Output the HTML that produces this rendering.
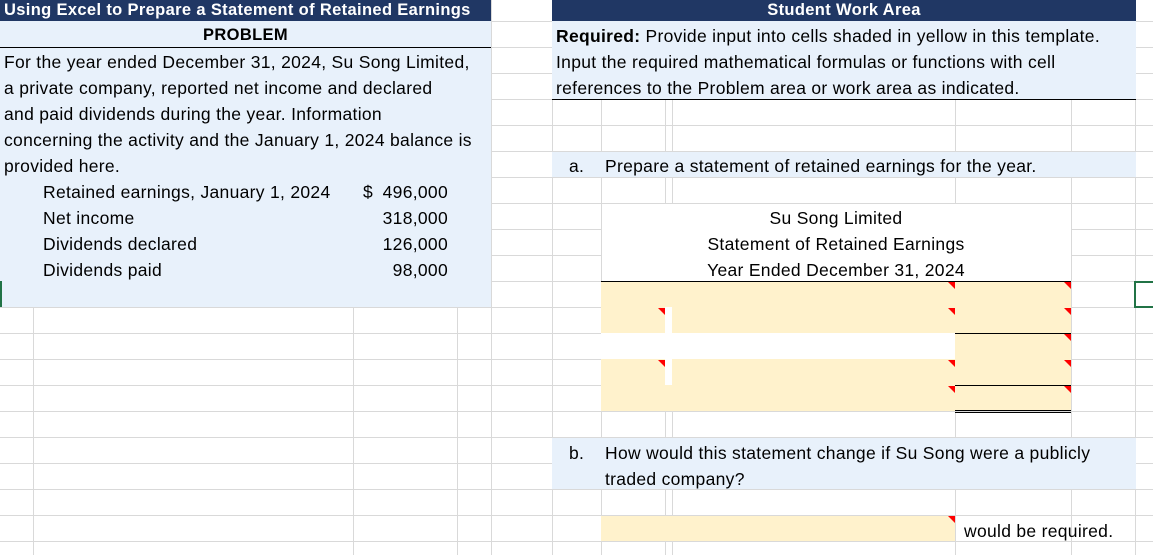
<!DOCTYPE html>
<html><head><meta charset="utf-8"><style>
body{margin:0;width:1153px;height:555px;overflow:hidden;background:#fff;position:relative;font-family:"Liberation Sans",sans-serif;font-size:17.5px;letter-spacing:.3px;color:#000}
.a{position:absolute}
.h{position:absolute;height:1px;background:#d9d9d9}
.v{position:absolute;width:1px;background:#d9d9d9}
.t{position:absolute;white-space:nowrap;line-height:26px;padding-top:2px}
.y{position:absolute;background:#fff2cc}
.b{position:absolute;background:#e8f1fb}
.r{position:absolute;width:0;height:0;border-top:7px solid #f00;border-left:7px solid transparent}
.k{position:absolute;height:1px;background:#000}
.bt{font-weight:bold;font-size:16.5px;letter-spacing:.35px;padding-top:0}
</style></head><body>
<div class="h" style="left:0;right:0;top:21px"></div>
<div class="h" style="left:0;right:0;top:47px"></div>
<div class="h" style="left:0;right:0;top:73px"></div>
<div class="h" style="left:0;right:0;top:99px"></div>
<div class="h" style="left:0;right:0;top:125px"></div>
<div class="h" style="left:0;right:0;top:151px"></div>
<div class="h" style="left:0;right:0;top:177px"></div>
<div class="h" style="left:0;right:0;top:203px"></div>
<div class="h" style="left:0;right:0;top:229px"></div>
<div class="h" style="left:0;right:0;top:255px"></div>
<div class="h" style="left:0;right:0;top:281px"></div>
<div class="h" style="left:0;right:0;top:307px"></div>
<div class="h" style="left:0;right:0;top:333px"></div>
<div class="h" style="left:0;right:0;top:359px"></div>
<div class="h" style="left:0;right:0;top:385px"></div>
<div class="h" style="left:0;right:0;top:411px"></div>
<div class="h" style="left:0;right:0;top:437px"></div>
<div class="h" style="left:0;right:0;top:463px"></div>
<div class="h" style="left:0;right:0;top:489px"></div>
<div class="h" style="left:0;right:0;top:515px"></div>
<div class="h" style="left:0;right:0;top:541px"></div>
<div class="v" style="top:0;bottom:0;left:33px"></div>
<div class="v" style="top:0;bottom:0;left:353px"></div>
<div class="v" style="top:0;bottom:0;left:457px"></div>
<div class="v" style="top:0;bottom:0;left:491px"></div>
<div class="v" style="top:0;bottom:0;left:552px"></div>
<div class="v" style="top:0;bottom:0;left:601px"></div>
<div class="v" style="top:0;bottom:0;left:665px"></div>
<div class="v" style="top:0;bottom:0;left:672px"></div>
<div class="v" style="top:0;bottom:0;left:955px"></div>
<div class="v" style="top:0;bottom:0;left:1071px"></div>
<div class="v" style="top:0;bottom:0;left:1135px"></div>

<div class="b" style="left:0;top:21px;width:491px;height:286px"></div>
<div class="a" style="left:0;top:0;width:491px;height:21px;background:#203764"></div>
<div class="t bt" style="left:4px;top:0;line-height:21px;color:#fff">Using Excel to Prepare a Statement of Retained Earnings</div>
<div class="t bt" style="left:0;width:491px;text-align:center;top:22px">PROBLEM</div>
<div class="k" style="left:0;width:491px;top:47px"></div>
<div class="t" style="left:4px;top:47px">For the year ended December 31, 2024, Su Song Limited,</div>
<div class="t" style="left:4px;top:73px">a private company, reported net income and declared</div>
<div class="t" style="left:4px;top:99px">and paid dividends during the year. Information</div>
<div class="t" style="left:4px;top:125px">concerning the activity and the January 1, 2024 balance is</div>
<div class="t" style="left:4px;top:151px">provided here.</div>
<div class="t" style="left:43px;top:177px">Retained earnings, January 1, 2024</div>
<div class="t" style="left:363px;top:177px">$</div>
<div class="t" style="right:705px;top:177px">496,000</div>
<div class="t" style="left:43px;top:203px">Net income</div>
<div class="t" style="right:705px;top:203px">318,000</div>
<div class="t" style="left:43px;top:229px">Dividends declared</div>
<div class="t" style="right:705px;top:229px">126,000</div>
<div class="t" style="left:43px;top:255px">Dividends paid</div>
<div class="t" style="right:705px;top:255px">98,000</div>
<div class="a" style="left:0;top:281px;width:2px;height:26px;background:#217346"></div>

<div class="a" style="left:552px;top:0;width:584px;height:21px;background:#203764"></div>
<div class="t bt" style="left:552px;width:584px;text-align:center;top:0;line-height:21px;color:#fff">Student Work Area</div>
<div class="b" style="left:552px;top:21px;width:584px;height:78px"></div>
<div class="k" style="left:552px;width:584px;top:99px"></div>
<div class="t" style="left:556px;top:21px"><b>Required:</b> Provide input into cells shaded in yellow in this template.</div>
<div class="t" style="left:556px;top:47px">Input the required mathematical formulas or functions with cell</div>
<div class="t" style="left:556px;top:73px">references to the Problem area or work area as indicated.</div>
<div class="b" style="left:552px;top:152px;width:584px;height:25px"></div>
<div class="t" style="left:569px;top:151px">a.</div>
<div class="t" style="left:605px;top:151px">Prepare a statement of retained earnings for the year.</div>
<div class="a" style="left:602px;top:204px;width:469px;height:77px;background:#fff"></div>
<div class="t" style="left:601px;width:470px;text-align:center;top:203px">Su Song Limited</div>
<div class="t" style="left:601px;width:470px;text-align:center;top:229px">Statement of Retained Earnings</div>
<div class="t" style="left:601px;width:470px;text-align:center;top:255px">Year Ended December 31, 2024</div>
<div class="k" style="left:601px;width:470px;top:281px"></div>

<div class="y" style="left:601px;top:282px;width:470px;height:51px"></div>
<div class="a" style="left:665px;top:307px;width:7px;height:26px;background:#fff"></div>
<div class="a" style="left:601px;top:333px;width:354px;height:26px;background:#fff"></div>
<div class="y" style="left:955px;top:334px;width:116px;height:25px"></div>
<div class="y" style="left:601px;top:359px;width:470px;height:52px"></div>
<div class="a" style="left:665px;top:359px;width:7px;height:26px;background:#fff"></div>
<div class="k" style="left:955px;width:116px;top:333px"></div>
<div class="k" style="left:955px;width:116px;top:385px"></div>
<div class="k" style="left:955px;width:116px;top:410px"></div>
<div class="k" style="left:955px;width:116px;top:412px"></div>
<div class="r" style="left:948px;top:282px"></div>
<div class="r" style="left:1064px;top:282px"></div>
<div class="r" style="left:658px;top:308px"></div>
<div class="r" style="left:948px;top:308px"></div>
<div class="r" style="left:1064px;top:308px"></div>
<div class="r" style="left:1064px;top:334px"></div>
<div class="r" style="left:658px;top:360px"></div>
<div class="r" style="left:948px;top:360px"></div>
<div class="r" style="left:1064px;top:360px"></div>
<div class="r" style="left:948px;top:386px"></div>
<div class="r" style="left:1064px;top:386px"></div>
<div class="a" style="left:1134px;top:281px;width:19px;height:27px;border:2px solid #217346;box-sizing:border-box;border-right:none"></div>

<div class="b" style="left:552px;top:438px;width:584px;height:51px"></div>
<div class="t" style="left:569px;top:438px">b.</div>
<div class="t" style="left:605px;top:438px">How would this statement change if Su Song were a publicly</div>
<div class="t" style="left:605px;top:464px">traded company?</div>
<div class="y" style="left:601px;top:516px;width:354px;height:25px"></div>
<div class="r" style="left:948px;top:516px"></div>
<div class="t" style="left:964px;top:516px">would be required.</div>
</body></html>
